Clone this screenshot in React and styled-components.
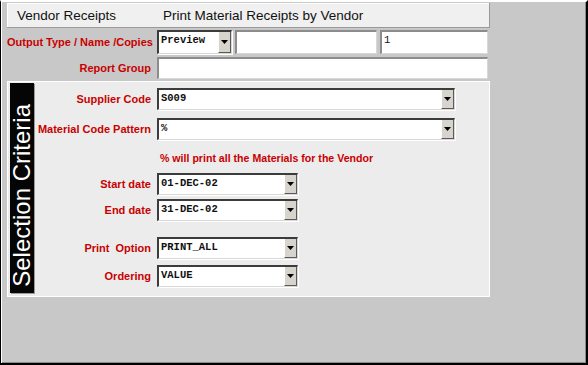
import styled, { createGlobalStyle } from 'styled-components';

const Global = createGlobalStyle`
    html, body {
        margin: 0;
        padding: 0;
        background: #c8c8c8;
    }
`;

export default function App() {
    return (
        <>
            <Global />
            <Window>
                <Panel>
                    <TitleBar>
                        <Title $width="146px">Vendor Receipts</Title>
                        <Title>Print Material Receipts by Vendor</Title>
                    </TitleBar>

                    <TopRows>
                        <Row $top="2px">
                            <Label $width="144px">Output Type / Name /Copies</Label>
                            <Select width="75px" height="24px" value="Preview" />
                            <Input $width="142px" $height="24px" />
                            <Input $width="108px" $height="24px" value="1" />
                        </Row>
                        <Row $top="3px">
                            <Label $width="144px">Report Group</Label>
                            <Input $width="331px" $height="22px" />
                        </Row>
                    </TopRows>

                    <Criteria>
                        <SideTag>
                            <span>Selection Criteria</span>
                        </SideTag>

                        <Fields>
                            <Row $top="5px">
                                <Label $width="117px">Supplier Code</Label>
                                <Select width="298px" value="S009" />
                            </Row>
                            <Row $top="8px">
                                <Label $width="117px">Material Code Pattern</Label>
                                <Select width="298px" value="%" />
                            </Row>
                            <Note>% will print all the Materials for the Vendor</Note>
                            <Row $top="9px">
                                <Label $width="117px">Start date</Label>
                                <Select width="141px" value="01-DEC-02" />
                            </Row>
                            <Row $top="4px">
                                <Label $width="117px">End date</Label>
                                <Select width="141px" value="31-DEC-02" />
                            </Row>
                            <Row $top="16px">
                                <Label $width="117px">Print&nbsp; Option</Label>
                                <Select width="141px" value="PRINT_ALL" />
                            </Row>
                            <Row $top="6px">
                                <Label $width="117px">Ordering</Label>
                                <Select width="141px" value="VALUE" />
                            </Row>
                        </Fields>
                    </Criteria>
                </Panel>
            </Window>
        </>
    );
}

function Select(props) {
    return (
        <SelectBox $width={props.width} $height={props.height || '22px'}>
            <Value>{props.value}</Value>
            <DropButton>
                <svg width="7" height="4" viewBox="0 0 7 4">
                    <path d="M0 0 H7 L3.5 4 Z" fill="#000" />
                </svg>
            </DropButton>
        </SelectBox>
    );
}

function Input(props) {
    return (
        <InputBox $width={props.$width} $height={props.$height}>
            <Value $light>{props.value}</Value>
        </InputBox>
    );
}

const Window = styled.div`
    width: 588px;
    height: 365px;
    box-sizing: border-box;
    border-top: 2px solid #ffffff;
    border-left: 1px solid #000000;
    border-right: 2px solid #000000;
    border-bottom: 2px solid #000000;
    box-shadow: inset 1px 0 0 #ffffff, inset -1px -1px 0 #8a8a8a;
    background: #c8c8c8;
    padding: 1px 0 0 6px;
    font-family: "Liberation Sans", Arial, sans-serif;
`;

const Panel = styled.div`
    width: 483px;
    display: flex;
    flex-direction: column;
`;

const TitleBar = styled.div`
    height: 24px;
    display: flex;
    align-items: center;
    padding-left: 10px;
    background: #f0f0f0;
    border-bottom: 1px solid #9a9a9a;
    border-right: 1px solid #9a9a9a;
    box-shadow: inset 1px 1px 0 #ffffff;
`;

const Title = styled.div`
    width: ${props => props.$width || 'auto'};
    font-size: 13.5px;
    color: #111111;
`;

const TopRows = styled.div`
    padding-bottom: 2px;
`;

const Row = styled.div`
    display: flex;
    align-items: center;
    gap: 3px;
    margin-top: ${props => props.$top};
`;

const Label = styled.div`
    width: ${props => props.$width};
    flex-shrink: 0;
    text-align: right;
    font-size: 11px;
    font-weight: bold;
    color: #c80000;
    padding-right: 3px;
    white-space: nowrap;
`;

const Criteria = styled.div`
    display: flex;
    background: #ececec;
    border: 1px solid #ffffff;
    padding: 1px 0 0 2px;
    height: 216px;
    box-sizing: border-box;
`;

const SideTag = styled.div`
    width: 24px;
    height: 210px;
    box-sizing: border-box;
    background: #050505;
    display: flex;
    align-items: flex-end;
    justify-content: center;
    padding-bottom: 6px;
    box-shadow: 1px 1px 0 #9a9a9a;

    span {
        writing-mode: vertical-rl;
        transform: rotate(180deg);
        color: #ffffff;
        font-size: 24px;
        line-height: 1;
        white-space: nowrap;
    }
`;

const Fields = styled.div`
    display: flex;
    flex-direction: column;
`;

const Note = styled.div`
    margin: 12px 0 0 126px;
    font-size: 10.6px;
    font-weight: bold;
    color: #c80000;
`;

const SelectBox = styled.div`
    width: ${props => props.$width};
    height: ${props => props.$height};
    box-sizing: border-box;
    display: flex;
    background: #ffffff;
    border-top: 2px solid #3c3c3c;
    border-left: 2px solid #3c3c3c;
    border-right: 1px solid #d8d8d8;
    border-bottom: 1px solid #d8d8d8;
    box-shadow: 1px 1px 0 #ffffff;
`;

const InputBox = styled.div`
    width: ${props => props.$width};
    height: ${props => props.$height};
    box-sizing: border-box;
    display: flex;
    background: #ffffff;
    border-top: 2px solid #8c8c8c;
    border-left: 2px solid #8c8c8c;
    border-right: 1px solid #d8d8d8;
    border-bottom: 1px solid #d8d8d8;
`;

const Value = styled.div`
    flex: 1;
    padding: 2px 0 0 2px;
    font-family: "Liberation Mono", "Courier New", monospace;
    font-size: 10.5px;
    font-weight: ${props => props.$light ? 'normal' : 'bold'};
    color: #111111;
    white-space: nowrap;
    overflow: hidden;
`;

const DropButton = styled.div`
    width: 13px;
    box-sizing: border-box;
    display: flex;
    align-items: center;
    justify-content: center;
    background: #d6d4cc;
    border-left: 1px solid #ffffff;
    border-right: 1px solid #5a5a5a;
    border-bottom: 1px solid #5a5a5a;
`;
